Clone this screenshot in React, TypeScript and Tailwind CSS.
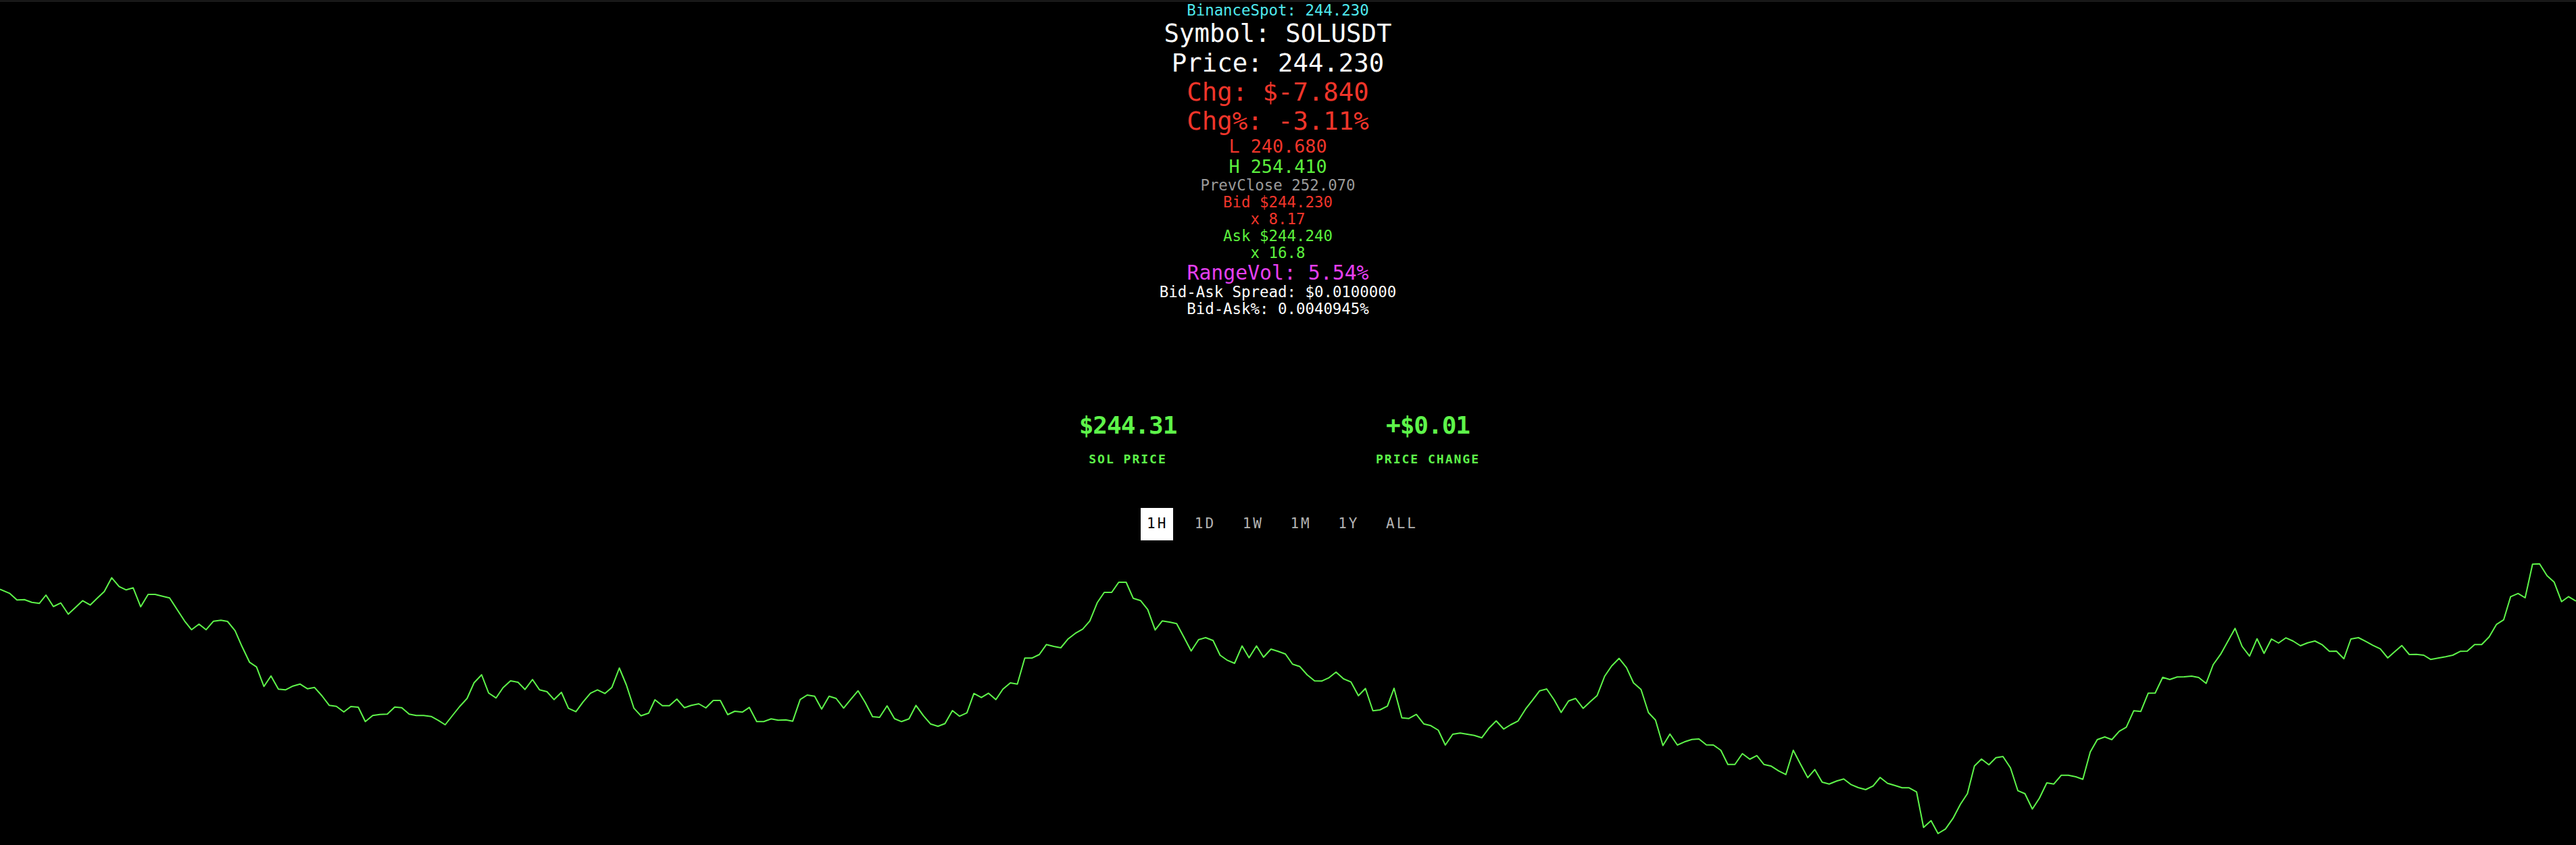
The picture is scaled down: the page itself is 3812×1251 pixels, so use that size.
import React, { useState } from 'react';

type Pt = [number, number];

// chart traced in four slices, each 960px wide, starting at the given x
const slice = (x0: number, pts: Pt[]): Pt[] =>
  pts.map(([x, y]) => [x0 + (x * 960) / 1568, y / 3]);

const linePoints: Pt[] = [
  ...slice(0, [
    [0, 160], [23, 178], [41, 208], [59, 206], [77, 218], [95, 223], [111, 186], [129, 237], [147, 221], [165, 271],
    [183, 240], [200, 211], [218, 230], [236, 198], [252, 170], [270, 109], [288, 148], [305, 163], [322, 154], [340, 238],
    [358, 183], [375, 183], [393, 191], [410, 199], [428, 250], [446, 301], [463, 340], [481, 315], [498, 340], [516, 302],
    [534, 298], [550, 303], [568, 344], [585, 415], [603, 484], [620, 505], [638, 592], [655, 545], [673, 604], [690, 607],
    [708, 590], [725, 581], [743, 602], [760, 596], [778, 633], [796, 676], [813, 680], [831, 705], [848, 681], [866, 684],
    [883, 748], [901, 721], [918, 716], [936, 715], [954, 683], [971, 686], [989, 715], [1006, 721], [1024, 721], [1042, 725],
    [1059, 742], [1076, 762], [1094, 720], [1111, 681], [1129, 645], [1146, 575], [1164, 540], [1181, 621], [1199, 643], [1216, 597],
    [1234, 567], [1252, 573], [1269, 605], [1287, 561], [1304, 607], [1322, 615], [1339, 650], [1357, 618], [1374, 689], [1392, 704],
    [1409, 661], [1427, 622], [1444, 607], [1462, 623], [1479, 596], [1497, 510], [1514, 585], [1532, 688], [1549, 722],
  ]),
  ...slice(960, [
    [0, 710], [15, 651], [33, 677], [50, 677], [68, 648], [86, 686], [103, 676], [121, 669], [138, 687], [156, 654],
    [173, 654], [191, 717], [208, 702], [226, 706], [243, 685], [261, 748], [278, 748], [296, 736], [313, 742], [331, 740],
    [348, 746], [366, 650], [383, 630], [401, 635], [418, 692], [436, 635], [453, 645], [471, 688], [488, 650], [506, 611],
    [523, 662], [541, 726], [558, 729], [576, 678], [594, 735], [611, 748], [629, 736], [646, 676], [664, 722], [681, 758],
    [699, 769], [716, 757], [734, 699], [751, 724], [769, 709], [786, 623], [804, 641], [821, 622], [839, 650], [856, 604],
    [874, 576], [891, 581], [909, 466], [926, 466], [944, 450], [961, 406], [979, 414], [996, 420], [1014, 380], [1031, 356],
    [1049, 337], [1066, 301], [1084, 220], [1101, 174], [1119, 174], [1136, 129], [1154, 129], [1171, 200], [1189, 211], [1206, 250],
    [1224, 341], [1241, 301], [1259, 306], [1276, 313], [1294, 374], [1311, 434], [1329, 384], [1346, 375], [1364, 388], [1381, 453],
    [1399, 476], [1416, 489], [1434, 412], [1451, 464], [1469, 412], [1486, 462], [1504, 426], [1521, 436], [1539, 448], [1556, 493],
  ]),
  ...slice(1900, [
    [38, 503], [56, 540], [74, 567], [91, 568], [108, 554], [126, 528], [144, 558], [162, 572], [180, 633], [197, 601],
    [215, 700], [232, 696], [250, 679], [266, 600], [285, 731], [302, 734], [320, 716], [338, 758], [355, 766], [373, 786],
    [390, 852], [408, 804], [426, 799], [443, 804], [460, 809], [478, 820], [496, 776], [513, 745], [531, 781], [548, 762],
    [566, 745], [584, 692], [601, 652], [618, 611], [635, 603], [653, 651], [670, 707], [688, 656], [705, 645], [723, 689],
    [740, 660], [757, 632], [775, 547], [792, 501], [810, 467], [828, 508], [845, 576], [863, 605], [881, 708], [898, 741],
    [916, 854], [933, 803], [951, 852], [968, 838], [986, 827], [1003, 825], [1021, 851], [1038, 852], [1056, 875], [1073, 938],
    [1090, 938], [1108, 890], [1126, 915], [1143, 899], [1160, 938], [1178, 946], [1196, 967], [1213, 983], [1231, 875], [1248, 935],
    [1266, 997], [1283, 961], [1301, 1017], [1318, 1025], [1336, 1012], [1353, 1003], [1371, 1028], [1388, 1041], [1406, 1050], [1424, 1034],
    [1441, 996], [1459, 1022], [1476, 1031], [1494, 1042], [1511, 1042], [1529, 1060], [1546, 1218], [1564, 1188],
  ]),
  ...slice(2852, [
    [26, 1245], [44, 1225], [62, 1178], [80, 1115], [97, 1068], [114, 945], [131, 914], [149, 940], [166, 908], [183, 903],
    [201, 953], [219, 1055], [236, 1068], [254, 1136], [271, 1088], [289, 1020], [306, 1025], [324, 986], [341, 986], [359, 993],
    [376, 1004], [394, 883], [411, 828], [429, 816], [446, 828], [464, 791], [481, 773], [499, 700], [516, 703], [534, 622],
    [551, 621], [569, 551], [586, 561], [604, 550], [621, 549], [639, 546], [656, 552], [674, 578], [691, 495], [709, 449],
    [726, 393], [744, 334], [761, 414], [779, 457], [797, 380], [814, 445], [832, 381], [849, 399], [867, 376], [884, 390],
    [902, 411], [919, 398], [937, 390], [954, 406], [972, 436], [989, 435], [1007, 469], [1024, 381], [1042, 375], [1060, 392],
    [1077, 409], [1095, 425], [1113, 465], [1130, 437], [1147, 410], [1165, 450], [1182, 449], [1200, 453], [1217, 472], [1235, 466],
    [1253, 460], [1270, 453], [1288, 436], [1305, 435], [1323, 406], [1340, 406], [1358, 372], [1376, 316], [1393, 296], [1410, 193],
    [1428, 179], [1445, 198], [1463, 49], [1480, 47], [1498, 100], [1515, 128], [1533, 215], [1550, 193], [1568, 213],
  ]),
];

const ranges = ['1H', '1D', '1W', '1M', '1Y', 'ALL'] as const;

export default function App() {
  const [range, setRange] = useState<(typeof ranges)[number]>('1H');

  return (
    <div className="min-h-screen bg-black overflow-hidden font-['DejaVu_Sans_Mono',monospace]">
      <div className="h-[2px] border-b border-[#3a3a3a]" />

      <div className="pr-[30px]">
        {/* quote ticker */}
        <div className="flex flex-col items-center whitespace-pre">
          <div className="text-[22.4px] leading-[26.4px] text-[#4fe9ee]">BinanceSpot: 244.230</div>
          <div className="text-[37.3px] leading-[43.3px] text-white">Symbol: SOLUSDT</div>
          <div className="text-[37.3px] leading-[43.3px] text-white">Price: 244.230</div>
          <div className="text-[37.3px] leading-[43.3px] text-[#f0352a]">Chg: $-7.840</div>
          <div className="text-[37.3px] leading-[43.3px] text-[#f0352a]">Chg%: -3.11%</div>
          <div className="text-[26.8px] leading-[30px] text-[#f0352a]">L 240.680</div>
          <div className="text-[26.8px] leading-[30px] text-[#5cf03e]">H 254.410</div>
          <div className="text-[22.4px] leading-[25px] text-[#9a9a9a]">PrevClose 252.070</div>
          <div className="text-[22.4px] leading-[25px] text-[#f0352a]">Bid $244.230</div>
          <div className="text-[22.4px] leading-[25px] text-[#f0352a]">x 8.17</div>
          <div className="text-[22.4px] leading-[25px] text-[#5cf03e]">Ask $244.240</div>
          <div className="text-[22.4px] leading-[25px] text-[#5cf03e]">x 16.8</div>
          <div className="text-[29.8px] leading-[33px] text-[#e53ff0]">RangeVol: 5.54%</div>
          <div className="text-[22.4px] leading-[25px] text-white">Bid-Ask Spread: $0.0100000</div>
          <div className="text-[22.4px] leading-[25px] text-white">Bid-Ask%: 0.0040945%</div>
        </div>

        {/* summary */}
        <div className="mt-[140px] mx-auto w-[888px] grid grid-cols-2 text-center text-[#5ef54a]">
          <div>
            <div className="text-[36px] leading-[40px] font-bold tracking-[-1px]">$244.31</div>
            <div className="mt-[18px] text-[18px] leading-[24px] font-bold tracking-[2px]">SOL PRICE</div>
          </div>
          <div>
            <div className="text-[36px] leading-[40px] font-bold tracking-[-1px]">+$0.01</div>
            <div className="mt-[18px] text-[18px] leading-[24px] font-bold tracking-[2px]">PRICE CHANGE</div>
          </div>
        </div>

        {/* range picker */}
        <div className="mt-[60px] pl-[12px] flex justify-center gap-[22.5px]">
          {ranges.map((r) => (
            <button
              key={r}
              onClick={() => setRange(r)}
              className={`h-[48px] pl-[9px] pr-[8px] flex items-center text-[21px] tracking-[3px] ${
                range === r ? 'bg-white text-black' : 'text-[#b3b3b3]'
              }`}
            >
              {r}
            </button>
          ))}
        </div>
      </div>

      <svg className="mt-[19px] block w-full h-[431px]" viewBox="0 0 3812 431" preserveAspectRatio="none">
        <polyline
          points={linePoints.map(([x, y]) => `${x.toFixed(1)},${y.toFixed(1)}`).join(' ')}
          fill="none"
          stroke="#5ef54a"
          strokeWidth={2}
          strokeLinejoin="round"
        />
      </svg>
    </div>
  );
}
